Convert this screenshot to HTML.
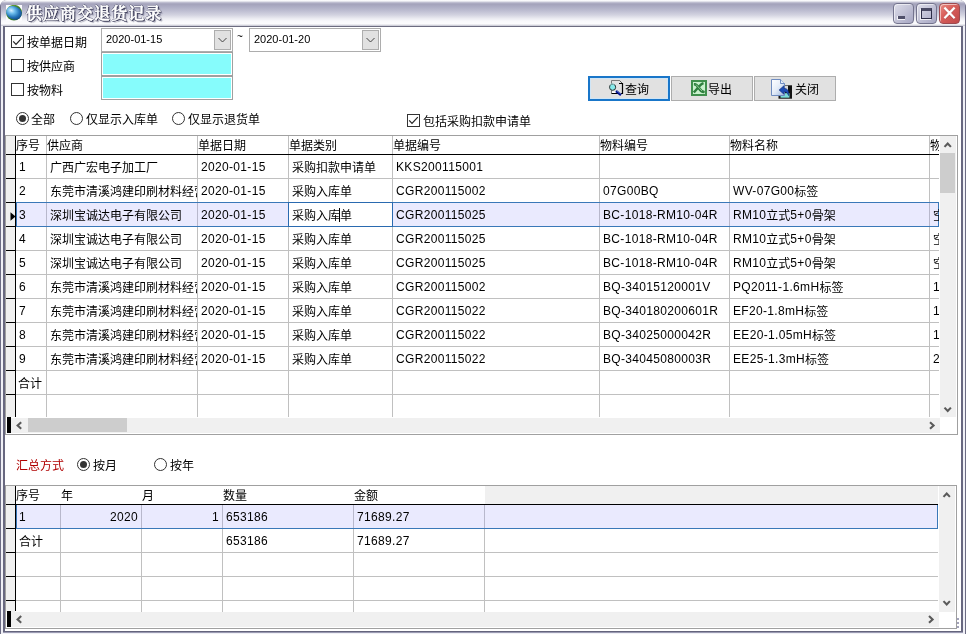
<!DOCTYPE html><html lang="zh-CN"><head><meta charset="utf-8"><title>供应商交退货记录</title><style>
*{box-sizing:border-box;margin:0;padding:0}
html,body{width:966px;height:634px;overflow:hidden;background:#fff}
body{position:relative;font-family:"Liberation Sans","Noto Sans CJK SC",sans-serif;font-size:12px;color:#000;line-height:1}
.abs{position:absolute}
#wrap{position:absolute;left:0;top:0;width:966px;height:634px;will-change:transform}
#frame{position:absolute;left:0;top:0;width:966px;height:634px;background:#f0f0f6;box-shadow:inset 1px 0 0 #70708a,inset -1px 0 0 #70708a;border-radius:7px 7px 0 0;overflow:hidden}
#tbar{position:absolute;left:0;top:0;width:966px;height:26px;background:linear-gradient(to bottom,#ffffff 0px,#f4f4f8 1px,#cfcfdc 2px,#aeadc4 3px,#a5a4bc 4.5px,#aeaec5 7px,#bfbfd2 11px,#d3d3e0 15px,#ebebf1 18.5px,#f8f8fb 21px,#fcfcfd 24px,#d0d0da 25.3px,#d0d0da 26px)}
#client{position:absolute;left:3px;top:26px;width:960px;height:606px;background:#fff;border:2px solid #686880;border-top:1px solid #6c6c80;border-bottom:none;box-shadow:0 1px 0 #9a9ab2}
#client::after{content:"";position:absolute;left:-2px;right:-2px;bottom:0;height:1px;background:#64647c}
#title{position:absolute;left:26px;top:4px;height:20px;line-height:20px;font-family:"Liberation Serif","Noto Serif CJK SC",serif;font-weight:600;-webkit-text-stroke:0.5px #fff;font-size:16px;letter-spacing:1.05px;color:#fff;text-shadow:1px 1px 0 #3c3c58,0 1px 0 #4c4c68,1px 0 0 #4c4c68,-1px 0 0 #6a6a84,0 -1px 0 #6a6a84,2px 2px 1px rgba(60,60,90,.45);white-space:nowrap}
.wb{position:absolute;top:3px;width:21px;height:21px;border-radius:4px;border:1px solid #74748e;background:linear-gradient(135deg,#dedeea,#c2c2d6 50%,#a6a6c2);box-shadow:inset 1px 1px 0 rgba(255,255,255,.55)}
.lbl{position:absolute;white-space:nowrap;font-size:12px;line-height:14px;height:14px;margin-top:1px}
.cb{position:absolute;width:13px;height:13px;border:1px solid #333;background:#fff}
.rb{position:absolute;width:13px;height:13px;border:1px solid #333;border-radius:50%;background:#fff}
.rb.on::after{content:"";position:absolute;left:2px;top:2px;width:7px;height:7px;border-radius:50%;background:#333}
.combo{position:absolute;height:24px;width:132px;border:1px solid #adadad;background:#fff}
.combo .t{position:absolute;left:4px;top:4px;font-size:11px;line-height:13px;white-space:nowrap}
.combo .b{position:absolute;right:1px;top:1px;width:17px;height:20px;border:1px solid #adadad;background:#e1e1e1}
.cy{position:absolute;left:101px;width:132px;height:24px;border:1px solid #a0a0a0;background:#fff}
.cy i{position:absolute;left:1px;top:1px;right:1px;bottom:1px;background:#86fcfc}
.btn{position:absolute;top:76px;width:82px;height:25px;border:1px solid #adadad;background:#e1e1e1}
.btn .tx{position:absolute;top:6px;font-size:12px;line-height:14px;white-space:nowrap}
.grid{position:absolute;border:1px solid #a0a0a0;background:#fff;overflow:hidden}
.hl{position:absolute;height:1px;background:#c0c0c0}
.vl{position:absolute;width:1px;background:#c0c0c0}
.c{position:absolute;white-space:nowrap;overflow:hidden;font-size:12px;line-height:14px;height:15px}
.l{letter-spacing:.33px;position:relative;top:-1px}
.sb{position:absolute;background:#f0f0f0}
.th{position:absolute;background:#cdcdcd}
</style></head><body><div id="wrap">
<div id="frame"><div id="tbar"></div>
<svg class="abs" style="left:6px;top:5px" width="16" height="16" viewBox="0 0 16 16">
<defs><radialGradient id="gl" cx="0.3" cy="0.42" r="0.75"><stop offset="0" stop-color="#d8f0ff"/><stop offset="0.3" stop-color="#6cbcec"/><stop offset="0.65" stop-color="#2474b8"/><stop offset="1" stop-color="#0c3c78"/></radialGradient>
<linearGradient id="gg" x1="0" y1="0" x2="1" y2="1"><stop offset="0" stop-color="#7ab43c"/><stop offset="0.5" stop-color="#3e7e28"/><stop offset="1" stop-color="#2e6a24"/></linearGradient>
<clipPath id="gc"><circle cx="8" cy="7.7" r="7.9"/></clipPath></defs>
<rect width="16" height="16" fill="#fbfbfd"/>
<circle cx="8" cy="7.7" r="7.9" fill="url(#gg)"/>
<g clip-path="url(#gc)"><ellipse cx="7.9" cy="7.9" rx="8.6" ry="6.4" transform="rotate(25 8 8)" fill="url(#gl)"/></g>
</svg>
<div id="title">供应商交退货记录</div>
<div class="wb" style="left:893px"><div class="abs" style="left:3px;top:12px;width:8px;height:4px;background:#50506a;border-bottom:1px solid #f0f0f6;border-left:1px solid #f0f0f6"></div></div>
<div class="wb" style="left:916px"><div class="abs" style="left:4px;top:4px;width:11px;height:11px;border:1px solid #2e2e48;border-top:3px solid #4a4a64;box-shadow:-1px 1px 0 #f0f0f6"></div></div>
<div class="wb" style="left:939px;border-color:#9c4a50;background:linear-gradient(135deg,#e88c84,#d8605c 40%,#c04848)"><svg class="abs" style="left:0;top:0" width="19" height="19" viewBox="0 0 19 19"><path d="M4.6 4.2 L14.4 14.4 M14.4 4.2 L4.6 14.4" stroke="#6a2020" stroke-width="2.6" fill="none" opacity=".55"/><path d="M4.4 3.6 L14.6 14.2 M14.6 3.6 L4.4 14.2" stroke="#fff" stroke-width="2.3" fill="none"/></svg></div>
<div id="client"></div><div class="abs" style="left:0;top:5px;width:1px;height:629px;background:#6c6c84"></div><div class="abs" style="left:965px;top:5px;width:1px;height:629px;background:#6c6c84"></div></div>
<div class="cb" style="left:11px;top:35px"><svg class="abs" style="left:0;top:0" width="11" height="11" viewBox="0 0 11 11"><polyline points="1.2,5.4 4,8.3 9.8,2.2" fill="none" stroke="#222" stroke-width="1.2"/></svg></div>
<div class="lbl" style="left:27px;top:35px">按单据日期</div>
<div class="cb" style="left:11px;top:59px"></div>
<div class="lbl" style="left:27px;top:59px">按供应商</div>
<div class="cb" style="left:11px;top:83px"></div>
<div class="lbl" style="left:27px;top:83px">按物料</div>
<div class="combo" style="left:101px;top:28px"><div class="t">2020-01-15</div><div class="b"><svg class="abs" style="left:0;top:0" width="15" height="18" viewBox="0 0 15 18"><polyline points="3.5,7 7.5,11 11.5,7" fill="none" stroke="#444" stroke-width="1"/></svg></div></div>
<div class="lbl" style="left:237px;top:29px;font-size:10px">~</div>
<div class="combo" style="left:249px;top:28px"><div class="t">2020-01-20</div><div class="b"><svg class="abs" style="left:0;top:0" width="15" height="18" viewBox="0 0 15 18"><polyline points="3.5,7 7.5,11 11.5,7" fill="none" stroke="#444" stroke-width="1"/></svg></div></div>
<div class="cy" style="top:52px"><i></i></div>
<div class="cy" style="top:76px"><i></i></div>
<div class="btn" style="left:588px;border:2px solid #1976c9;box-shadow:inset 0 0 0 1px #cfe5f6"><svg class="abs" style="left:18px;top:2px" width="18" height="17" viewBox="0 0 18 17"><path d="M3.5 13.5 V0.5 H11.5" fill="none" stroke="#7a7a7a" stroke-width="1"/><path d="M11.5 0.5 L14.5 3.5" fill="none" stroke="#555" stroke-width="1"/><path d="M11 3.5 H14.5 V13.5 H3.5" fill="none" stroke="#000" stroke-width="1.2"/><rect x="4" y="11.5" width="5" height="1.5" fill="#fff"/><line x1="8" y1="11" x2="13" y2="15" stroke="#00108c" stroke-width="2.4"/><line x1="8.6" y1="10.6" x2="13.4" y2="14.3" stroke="#9ab0f0" stroke-width="0.6"/><circle cx="4.6" cy="7.2" r="3.1" fill="#86eaea" stroke="#222" stroke-width="0.9"/><path d="M2 5.2 A3.1 3.1 0 0 1 6.5 4.6" fill="none" stroke="#9adada" stroke-width="1"/></svg><div class="tx" style="left:35px;top:5px">查询</div></div>
<div class="btn" style="left:671px"><svg class="abs" style="left:19px;top:3px" width="16" height="16" viewBox="0 0 16 16"><rect x="0" y="0" width="16" height="16" fill="#3f8f4c"/><rect x="2" y="2" width="12" height="12" fill="#c9f1cd"/><path d="M3.4 3.6 C5 3.2 6.2 4.2 7.6 6 C9.4 8.4 10.6 11 13.2 11.4 L13 12.6 C10 12.8 8.6 10.6 7 8.2 C5.8 6.4 5 5.2 3.4 5Z" fill="#2f7f3e" stroke="#2f7f3e" stroke-width="1.1" stroke-linejoin="round"/><path d="M11.4 3.6 C9.2 4.4 6.6 8.6 3.6 11.6" stroke="#2f7f3e" stroke-width="2.4" fill="none" stroke-linecap="square"/><path d="M5 4.6 L11 11" stroke="#b4e8b8" stroke-width="0.7"/></svg><div class="tx" style="left:36px">导出</div></div>
<div class="btn" style="left:754px"><svg class="abs" style="left:15px;top:1px" width="24" height="22" viewBox="0 0 24 22"><defs><linearGradient id="dg" x1="0" y1="0" x2="1" y2="1"><stop offset="0" stop-color="#fff"/><stop offset="0.5" stop-color="#e4ecf8"/><stop offset="1" stop-color="#9cb6dc"/></linearGradient></defs><rect x="8.5" y="7.3" width="13.5" height="13.4" fill="#111"/><rect x="15" y="7.8" width="3" height="5" fill="#d8d8d8"/><rect x="10.5" y="15.2" width="9" height="4.5" fill="#7adcd8"/><path d="M1.5 1.5 H10.5 L14.5 5.5 V17.5 H1.5Z" fill="url(#dg)" stroke="#6f8cc0" stroke-width="1"/><path d="M10.5 1.5 V5.5 H14.5" fill="#e6eefa" stroke="#6f8cc0" stroke-width="1"/><path transform="translate(0.9,0.2)" d="M8.2 11.8 L13 7.6 V10.2 C16.8 10.2 18.2 12.6 17.6 17.4 C16.6 14.4 15.4 13.6 13 13.6 V16Z" fill="#1c4cb4" stroke="#0d2a78" stroke-width="0.6"/></svg><div class="tx" style="left:40px">关闭</div></div>
<div class="rb on" style="left:16px;top:112px"></div>
<div class="lbl" style="left:31px;top:112px">全部</div>
<div class="rb" style="left:70px;top:112px"></div>
<div class="lbl" style="left:86px;top:112px">仅显示入库单</div>
<div class="rb" style="left:172px;top:112px"></div>
<div class="lbl" style="left:188px;top:112px">仅显示退货单</div>
<div class="cb" style="left:407px;top:114px"><svg class="abs" style="left:0;top:0" width="11" height="11" viewBox="0 0 11 11"><polyline points="1.2,5.4 4,8.3 9.8,2.2" fill="none" stroke="#222" stroke-width="1.2"/></svg></div>
<div class="lbl" style="left:423px;top:114px">包括采购扣款申请单</div>
<div class="grid" style="left:5px;top:135px;width:953px;height:300px"><div class="abs" style="left:0;top:0;width:9px;height:281px;background:#f0f0f0"></div><div class="c" style="left:10px;top:3px;width:30px">序号</div><div class="c" style="left:41px;top:3px;width:150px">供应商</div><div class="c" style="left:192px;top:3px;width:90px">单据日期</div><div class="c" style="left:283px;top:3px;width:103px">单据类别</div><div class="c" style="left:387px;top:3px;width:206px">单据编号</div><div class="c" style="left:594px;top:3px;width:129px">物料编号</div><div class="c" style="left:724px;top:3px;width:199px">物料名称</div><div class="c" style="left:924px;top:3px;width:9px">物料规格</div><div class="vl" style="left:40px;top:0px;height:281px"></div><div class="vl" style="left:191px;top:0px;height:281px"></div><div class="vl" style="left:282px;top:0px;height:281px"></div><div class="vl" style="left:386px;top:0px;height:281px"></div><div class="vl" style="left:593px;top:0px;height:281px"></div><div class="vl" style="left:723px;top:0px;height:281px"></div><div class="vl" style="left:923px;top:0px;height:281px"></div><div class="hl" style="left:10px;top:42px;width:923px"></div><div class="hl" style="left:10px;top:66px;width:923px"></div><div class="hl" style="left:10px;top:90px;width:923px"></div><div class="hl" style="left:10px;top:114px;width:923px"></div><div class="hl" style="left:10px;top:138px;width:923px"></div><div class="hl" style="left:10px;top:162px;width:923px"></div><div class="hl" style="left:10px;top:186px;width:923px"></div><div class="hl" style="left:10px;top:210px;width:923px"></div><div class="hl" style="left:10px;top:234px;width:923px"></div><div class="hl" style="left:10px;top:258px;width:923px"></div><div class="hl" style="left:0;top:18px;width:9px;background:#000"></div><div class="hl" style="left:0;top:42px;width:9px;background:#000"></div><div class="hl" style="left:0;top:66px;width:9px;background:#000"></div><div class="hl" style="left:0;top:90px;width:9px;background:#000"></div><div class="hl" style="left:0;top:114px;width:9px;background:#000"></div><div class="hl" style="left:0;top:138px;width:9px;background:#000"></div><div class="hl" style="left:0;top:162px;width:9px;background:#000"></div><div class="hl" style="left:0;top:186px;width:9px;background:#000"></div><div class="hl" style="left:0;top:210px;width:9px;background:#000"></div><div class="hl" style="left:0;top:234px;width:9px;background:#000"></div><div class="hl" style="left:0;top:258px;width:9px;background:#000"></div><div class="abs" style="left:10px;top:66px;width:923px;height:25px;background:#eaeafe;border:1px solid #3a78b8"></div><div class="vl" style="left:40px;top:67px;height:23px;background:#b8b8cc"></div><div class="vl" style="left:191px;top:67px;height:23px;background:#b8b8cc"></div><div class="vl" style="left:282px;top:67px;height:23px;background:#b8b8cc"></div><div class="vl" style="left:386px;top:67px;height:23px;background:#b8b8cc"></div><div class="vl" style="left:593px;top:67px;height:23px;background:#b8b8cc"></div><div class="vl" style="left:723px;top:67px;height:23px;background:#b8b8cc"></div><div class="vl" style="left:923px;top:67px;height:23px;background:#b8b8cc"></div><div class="abs" style="left:282px;top:66px;width:105px;height:25px;background:#fff;border:1px solid #2a6ab0"></div><div class="hl" style="left:0;top:18px;width:933px;background:#000"></div><div class="vl" style="left:9px;top:0;height:281px;background:#000"></div><svg class="abs" style="left:4px;top:76px" width="6" height="9" viewBox="0 0 6 9"><path d="M0.5 0.3 L5.5 4.5 L0.5 8.7Z" fill="#000"/></svg><div class="c" style="left:13px;top:25px;width:27px"><span class="l">1</span></div><div class="c" style="left:44px;top:25px;width:147px">广西广宏电子加工厂</div><div class="c" style="left:195px;top:25px;width:87px"><span class="l">2020-01-15</span></div><div class="c" style="left:286px;top:25px;width:100px">采购扣款申请单</div><div class="c" style="left:390px;top:25px;width:203px"><span class="l">KKS200115001</span></div><div class="c" style="left:13px;top:49px;width:27px"><span class="l">2</span></div><div class="c" style="left:44px;top:49px;width:147px">东莞市清溪鸿建印刷材料经营部</div><div class="c" style="left:195px;top:49px;width:87px"><span class="l">2020-01-15</span></div><div class="c" style="left:286px;top:49px;width:100px">采购入库单</div><div class="c" style="left:390px;top:49px;width:203px"><span class="l">CGR200115002</span></div><div class="c" style="left:597px;top:49px;width:126px"><span class="l">07G00BQ</span></div><div class="c" style="left:727px;top:49px;width:196px"><span class="l">WV-07G00</span>标签</div><div class="c" style="left:13px;top:73px;width:27px"><span class="l">3</span></div><div class="c" style="left:44px;top:73px;width:147px">深圳宝诚达电子有限公司</div><div class="c" style="left:195px;top:73px;width:87px"><span class="l">2020-01-15</span></div><div class="c" style="left:286px;top:73px;width:100px">采购入库单</div><div class="c" style="left:390px;top:73px;width:203px"><span class="l">CGR200115025</span></div><div class="c" style="left:597px;top:73px;width:126px"><span class="l">BC-1018-RM10-04R</span></div><div class="c" style="left:727px;top:73px;width:196px"><span class="l">RM10</span>立式<span class="l">5+0</span>骨架</div><div class="c" style="left:927px;top:73px;width:6px">空心</div><div class="c" style="left:13px;top:97px;width:27px"><span class="l">4</span></div><div class="c" style="left:44px;top:97px;width:147px">深圳宝诚达电子有限公司</div><div class="c" style="left:195px;top:97px;width:87px"><span class="l">2020-01-15</span></div><div class="c" style="left:286px;top:97px;width:100px">采购入库单</div><div class="c" style="left:390px;top:97px;width:203px"><span class="l">CGR200115025</span></div><div class="c" style="left:597px;top:97px;width:126px"><span class="l">BC-1018-RM10-04R</span></div><div class="c" style="left:727px;top:97px;width:196px"><span class="l">RM10</span>立式<span class="l">5+0</span>骨架</div><div class="c" style="left:927px;top:97px;width:6px">空心</div><div class="c" style="left:13px;top:121px;width:27px"><span class="l">5</span></div><div class="c" style="left:44px;top:121px;width:147px">深圳宝诚达电子有限公司</div><div class="c" style="left:195px;top:121px;width:87px"><span class="l">2020-01-15</span></div><div class="c" style="left:286px;top:121px;width:100px">采购入库单</div><div class="c" style="left:390px;top:121px;width:203px"><span class="l">CGR200115025</span></div><div class="c" style="left:597px;top:121px;width:126px"><span class="l">BC-1018-RM10-04R</span></div><div class="c" style="left:727px;top:121px;width:196px"><span class="l">RM10</span>立式<span class="l">5+0</span>骨架</div><div class="c" style="left:927px;top:121px;width:6px">空心</div><div class="c" style="left:13px;top:145px;width:27px"><span class="l">6</span></div><div class="c" style="left:44px;top:145px;width:147px">东莞市清溪鸿建印刷材料经营部</div><div class="c" style="left:195px;top:145px;width:87px"><span class="l">2020-01-15</span></div><div class="c" style="left:286px;top:145px;width:100px">采购入库单</div><div class="c" style="left:390px;top:145px;width:203px"><span class="l">CGR200115002</span></div><div class="c" style="left:597px;top:145px;width:126px"><span class="l">BQ-34015120001V</span></div><div class="c" style="left:727px;top:145px;width:196px"><span class="l">PQ2011-1.6mH</span>标签</div><div class="c" style="left:927px;top:145px;width:6px"><span class="l">16</span></div><div class="c" style="left:13px;top:169px;width:27px"><span class="l">7</span></div><div class="c" style="left:44px;top:169px;width:147px">东莞市清溪鸿建印刷材料经营部</div><div class="c" style="left:195px;top:169px;width:87px"><span class="l">2020-01-15</span></div><div class="c" style="left:286px;top:169px;width:100px">采购入库单</div><div class="c" style="left:390px;top:169px;width:203px"><span class="l">CGR200115022</span></div><div class="c" style="left:597px;top:169px;width:126px"><span class="l">BQ-340180200601R</span></div><div class="c" style="left:727px;top:169px;width:196px"><span class="l">EF20-1.8mH</span>标签</div><div class="c" style="left:927px;top:169px;width:6px"><span class="l">18</span></div><div class="c" style="left:13px;top:193px;width:27px"><span class="l">8</span></div><div class="c" style="left:44px;top:193px;width:147px">东莞市清溪鸿建印刷材料经营部</div><div class="c" style="left:195px;top:193px;width:87px"><span class="l">2020-01-15</span></div><div class="c" style="left:286px;top:193px;width:100px">采购入库单</div><div class="c" style="left:390px;top:193px;width:203px"><span class="l">CGR200115022</span></div><div class="c" style="left:597px;top:193px;width:126px"><span class="l">BQ-34025000042R</span></div><div class="c" style="left:727px;top:193px;width:196px"><span class="l">EE20-1.05mH</span>标签</div><div class="c" style="left:927px;top:193px;width:6px"><span class="l">10</span></div><div class="c" style="left:13px;top:217px;width:27px"><span class="l">9</span></div><div class="c" style="left:44px;top:217px;width:147px">东莞市清溪鸿建印刷材料经营部</div><div class="c" style="left:195px;top:217px;width:87px"><span class="l">2020-01-15</span></div><div class="c" style="left:286px;top:217px;width:100px">采购入库单</div><div class="c" style="left:390px;top:217px;width:203px"><span class="l">CGR200115022</span></div><div class="c" style="left:597px;top:217px;width:126px"><span class="l">BQ-34045080003R</span></div><div class="c" style="left:727px;top:217px;width:196px"><span class="l">EE25-1.3mH</span>标签</div><div class="c" style="left:927px;top:217px;width:6px"><span class="l">25</span></div><div class="c" style="left:12px;top:241px;width:30px">合计</div><div class="abs" style="left:333px;top:72px;width:1px;height:14px;background:#000"></div><div class="sb" style="left:934px;top:0;width:16px;height:281px"></div><div class="th" style="left:934px;top:17px;width:15px;height:40px"></div><svg class="abs" style="left:933px;top:0" width="17" height="281" viewBox="0 0 17 281"><polyline points="5.5,10.9 8.7,7.5 11.9,10.9" fill="none" stroke="#5a5a5a" stroke-width="2.1"/><polyline points="5.5,271.6 8.7,275.0 11.9,271.6" fill="none" stroke="#5a5a5a" stroke-width="2.1"/></svg><div class="sb" style="left:5px;top:282px;width:929px;height:15px"></div><div class="abs" style="left:1px;top:281px;width:4px;height:16px;background:#000"></div><div class="th" style="left:22px;top:282px;width:99px;height:14px"></div><svg class="abs" style="left:5px;top:281px" width="929" height="16" viewBox="0 0 929 16"><polyline points="10.2,5.2 6.6,8.5 10.2,11.8" fill="none" stroke="#5a5a5a" stroke-width="2.1"/><polyline points="919.0,5.2 922.6,8.5 919.0,11.8" fill="none" stroke="#5a5a5a" stroke-width="2.1"/></svg></div>
<div class="lbl" style="left:16px;top:458px;color:#b00000">汇总方式</div>
<div class="rb on" style="left:77px;top:458px"></div>
<div class="lbl" style="left:93px;top:458px">按月</div>
<div class="rb" style="left:154px;top:458px"></div>
<div class="lbl" style="left:170px;top:458px">按年</div>
<div class="grid" style="left:5px;top:485px;width:952px;height:144px"><div class="abs" style="left:0;top:0;width:9px;height:126px;background:#f0f0f0"></div><div class="abs" style="left:479px;top:0;width:453px;height:18px;background:#f0f0f0"></div><div class="c" style="left:10px;top:3px;width:44px">序号</div><div class="c" style="left:55px;top:3px;width:80px">年</div><div class="c" style="left:136px;top:3px;width:80px">月</div><div class="c" style="left:217px;top:3px;width:130px">数量</div><div class="c" style="left:348px;top:3px;width:130px">金额</div><div class="vl" style="left:54px;top:19px;height:107px"></div><div class="vl" style="left:135px;top:19px;height:107px"></div><div class="vl" style="left:216px;top:19px;height:107px"></div><div class="vl" style="left:347px;top:19px;height:107px"></div><div class="vl" style="left:478px;top:19px;height:107px"></div><div class="hl" style="left:10px;top:42px;width:922px"></div><div class="hl" style="left:10px;top:66px;width:922px"></div><div class="hl" style="left:10px;top:90px;width:922px"></div><div class="hl" style="left:10px;top:114px;width:922px"></div><div class="hl" style="left:0;top:18px;width:9px;background:#000"></div><div class="hl" style="left:0;top:42px;width:9px;background:#000"></div><div class="hl" style="left:0;top:66px;width:9px;background:#000"></div><div class="hl" style="left:0;top:90px;width:9px;background:#000"></div><div class="hl" style="left:0;top:114px;width:9px;background:#000"></div><div class="abs" style="left:10px;top:18px;width:922px;height:25px;background:#eaeafe;border:1px solid #3a78b8"></div><div class="vl" style="left:54px;top:19px;height:23px;background:#b8b8cc"></div><div class="vl" style="left:135px;top:19px;height:23px;background:#b8b8cc"></div><div class="vl" style="left:216px;top:19px;height:23px;background:#b8b8cc"></div><div class="vl" style="left:347px;top:19px;height:23px;background:#b8b8cc"></div><div class="vl" style="left:478px;top:19px;height:23px;background:#b8b8cc"></div><div class="hl" style="left:0;top:18px;width:932px;background:#000"></div><div class="vl" style="left:9px;top:0;height:125px;background:#000"></div><div class="c" style="left:13px;top:25px;width:30px"><span class="l">1</span></div><div class="c" style="left:55px;top:25px;width:77px;text-align:right"><span class="l">2020</span></div><div class="c" style="left:136px;top:25px;width:77px;text-align:right"><span class="l">1</span></div><div class="c" style="left:220px;top:25px;width:100px"><span class="l">653186</span></div><div class="c" style="left:351px;top:25px;width:100px"><span class="l">71689.27</span></div><div class="c" style="left:13px;top:49px;width:30px">合计</div><div class="c" style="left:220px;top:49px;width:100px"><span class="l">653186</span></div><div class="c" style="left:351px;top:49px;width:100px"><span class="l">71689.27</span></div><div class="sb" style="left:933px;top:0;width:16px;height:126px"></div><svg class="abs" style="left:932px;top:0" width="17" height="126" viewBox="0 0 17 126"><polyline points="5.5,10.9 8.7,7.5 11.9,10.9" fill="none" stroke="#5a5a5a" stroke-width="2.1"/><polyline points="5.5,115.1 8.7,118.5 11.9,115.1" fill="none" stroke="#5a5a5a" stroke-width="2.1"/></svg><div class="sb" style="left:5px;top:126px;width:928px;height:15px"></div><div class="abs" style="left:1px;top:125px;width:4px;height:16px;background:#000"></div><svg class="abs" style="left:5px;top:126px" width="929" height="16" viewBox="0 0 929 16"><polyline points="10.2,4.1 6.6,7.4 10.2,10.7" fill="none" stroke="#5a5a5a" stroke-width="2.1"/><polyline points="918.0,4.1 921.6,7.4 918.0,10.7" fill="none" stroke="#5a5a5a" stroke-width="2.1"/></svg></div>
<div class="abs" style="left:957px;top:618px;width:2px;height:2px;background:#a2a2ba"></div>
<div class="abs" style="left:957px;top:622px;width:2px;height:2px;background:#a2a2ba"></div>
<div class="abs" style="left:957px;top:626px;width:2px;height:2px;background:#a2a2ba"></div>
</div></body></html>
